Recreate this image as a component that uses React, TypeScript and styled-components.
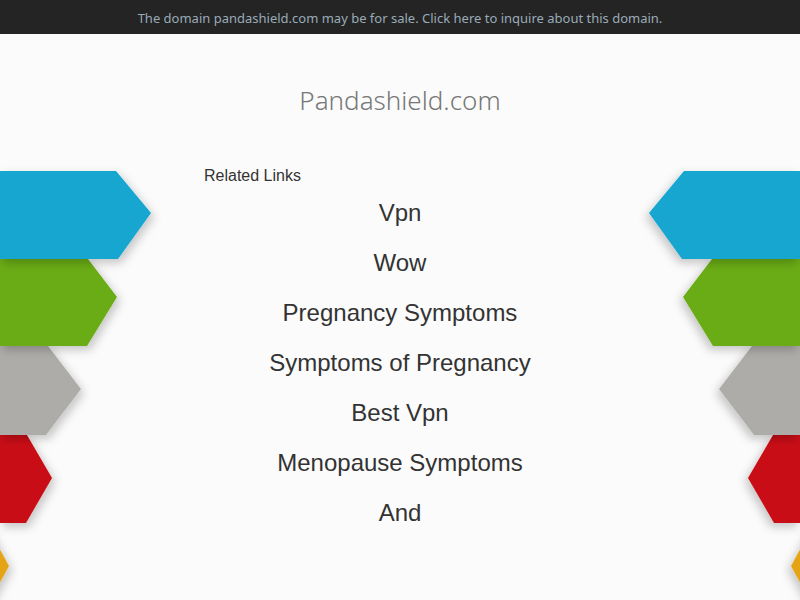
import styled, { createGlobalStyle } from 'styled-components';

const GlobalStyle = createGlobalStyle`
  html, body {
    margin: 0;
    padding: 0;
    background: #fbfbfb;
    overflow: hidden;
  }
`;

const links = [
  'Vpn',
  'Wow',
  'Pregnancy Symptoms',
  'Symptoms of Pregnancy',
  'Best Vpn',
  'Menopause Symptoms',
  'And',
];

interface Piece {
  color: string;
  points: string;
}

// drawn bottom first so the upper piece throws its shadow on the lower one
const leftPieces: Piece[] = [
  { color: '#e5a413', points: '-40,524 -14,524 9,566 -14,608 -40,608' },
  { color: '#c91113', points: '0,435 27,435 52,478 26,523 0,523' },
  { color: '#adaca8', points: '0,346 48,346 81,389 46,435 0,435' },
  { color: '#6aac13', points: '0,259 88,259 117,297 87,346 0,346' },
  { color: '#12a6d0', points: '0,171 116,171 151,213 118,259 0,259' },
];

const rightPieces: Piece[] = leftPieces.map((p) => ({
  color: p.color,
  points: p.points
    .split(' ')
    .map((pt) => {
      const [x, y] = pt.split(',').map(Number);
      return `${800 - x},${y}`;
    })
    .join(' '),
}));

function Decoration() {
  return (
    <DecoSvg width="800" height="600" viewBox="0 0 800 600">
      <defs>
        <filter id="drop" x="-20%" y="-20%" width="140%" height="150%">
          <feDropShadow dx="3" dy="4" stdDeviation="5" floodColor="#000" floodOpacity="0.22" />
        </filter>
        <filter id="dropR" x="-20%" y="-20%" width="140%" height="150%">
          <feDropShadow dx="-3" dy="4" stdDeviation="5" floodColor="#000" floodOpacity="0.22" />
        </filter>
      </defs>
      {leftPieces.map((p) => (
        <polygon key={'l' + p.color} points={p.points} fill={p.color} filter="url(#drop)" />
      ))}
      {rightPieces.map((p) => (
        <polygon key={'r' + p.color} points={p.points} fill={p.color} filter="url(#dropR)" />
      ))}
    </DecoSvg>
  );
}

export default function App() {
  return (
    <Page>
      <GlobalStyle />
      <Decoration />
      <TopBar>The domain pandashield.com may be for sale. Click here to inquire about this domain.</TopBar>
      <Title>Pandashield.com</Title>
      <LinksBox>
        <LinksHeading>Related Links</LinksHeading>
        <LinkList>
          {links.map((l) => (
            <LinkItem key={l}>{l}</LinkItem>
          ))}
        </LinkList>
      </LinksBox>
    </Page>
  );
}

const Page = styled.div`
  position: relative;
  width: 800px;
  height: 600px;
  overflow: hidden;
  background: #fbfbfb;
`;

const DecoSvg = styled.svg`
  position: absolute;
  left: 0;
  top: 0;
  pointer-events: none;
`;

const TopBar = styled.div`
  position: relative;
  height: 34px;
  line-height: 36px;
  background: #242424;
  color: #9aabb8;
  font-family: 'Noto Sans', sans-serif;
  font-size: 13px;
  text-align: center;
`;

const Title = styled.h1`
  position: relative;
  margin: 51px 0 0;
  height: 30px;
  line-height: 30px;
  text-align: center;
  font-family: 'Noto Sans', sans-serif;
  font-weight: 300;
  font-size: 26px;
  color: #777;
`;

const LinksBox = styled.div`
  position: relative;
  width: 392px;
  margin: 51px auto 0;
  font-family: 'Liberation Sans', Arial, sans-serif;
  color: #333;
`;

const LinksHeading = styled.div`
  font-size: 16px;
  line-height: 20px;
`;

const LinkList = styled.div`
  display: flex;
  flex-direction: column;
  align-items: center;
  margin-top: 2px;
`;

const LinkItem = styled.div`
  font-size: 24px;
  line-height: 50px;
`;
